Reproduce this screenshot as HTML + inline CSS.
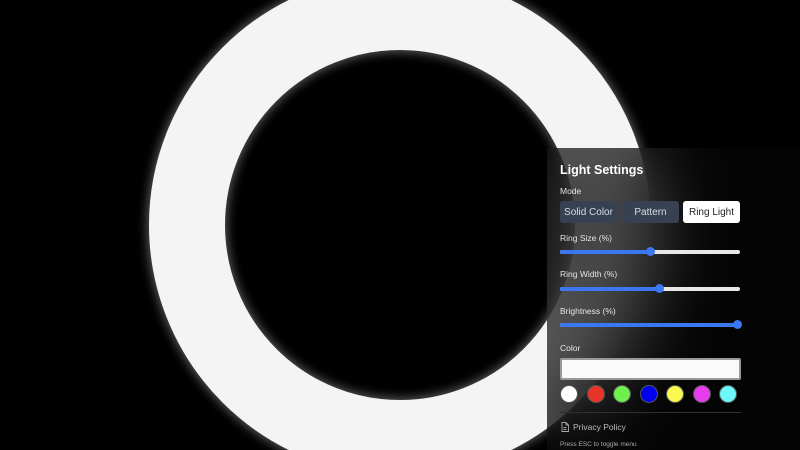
<!DOCTYPE html>
<html><head><style>
html,body{margin:0;padding:0;width:800px;height:450px;overflow:hidden;background:#000;font-family:"Liberation Sans",sans-serif;}
.wrap{position:relative;width:800px;height:450px;overflow:hidden;}
svg.bg{position:absolute;left:0;top:0}
.panel{position:absolute;left:547px;top:148px;width:253px;height:302px;background:rgba(6,6,6,.65);backdrop-filter:blur(40px);-webkit-backdrop-filter:blur(40px);color:#fff;}
.a{position:absolute;left:13px;}
.t{font-size:12.5px;font-weight:bold;top:15px}
.l{font-size:8.5px;color:#e6e6e6}
.btn{position:absolute;top:53px;height:22px;width:57px;border-radius:3px;background:#374151;color:#d8dde4;font-size:10px;text-align:center;line-height:23px}
.sl{position:absolute;left:13px;width:180px;height:4px;border-radius:2px;background:#e8e8e8}
.sl i{position:absolute;left:0;top:0;height:4px;border-radius:2px;background:#3b78f0}
.sl b{position:absolute;top:-3px;width:9px;height:9px;border-radius:50%;background:#3b78f0;margin-left:-4px}
.sw{position:absolute;top:237px;width:16px;height:16px;border-radius:50%;border:1px solid #555}
</style></head><body><div class="wrap">
<svg class="bg" width="800" height="450" viewBox="0 0 800 450">
<defs><filter id="g" x="-20%" y="-20%" width="140%" height="140%"><feGaussianBlur stdDeviation="5"/></filter></defs>
<circle cx="400" cy="225" r="213" fill="none" stroke="#fff" stroke-opacity=".35" stroke-width="80" filter="url(#g)"/>
<circle cx="400" cy="225" r="213" fill="none" stroke="#f4f4f4" stroke-width="76"/>
</svg>
<div class="panel">
<div class="a t">Light Settings</div>
<div class="a l" style="top:38px">Mode</div>
<div class="btn" style="left:13px">Solid Color</div>
<div class="btn" style="left:75px">Pattern</div>
<div class="btn" style="left:136px;background:#fff;color:#222">Ring Light</div>
<div class="a l" style="top:85px">Ring Size (%)</div>
<div class="sl" style="top:102px"><i style="width:90px"></i><b style="left:90px"></b></div>
<div class="a l" style="top:121px">Ring Width (%)</div>
<div class="sl" style="top:139px"><i style="width:99px"></i><b style="left:99px"></b></div>
<div class="a l" style="top:158px">Brightness (%)</div>
<div class="sl" style="top:175px"><i style="width:177px"></i><b style="left:177px"></b></div>
<div class="a l" style="top:195px">Color</div>
<div style="position:absolute;left:13px;top:210px;width:177px;height:18px;background:#fafafa;border:2px solid #999;border-radius:2px"></div>
<div class="sw" style="left:13px;background:#fff"></div>
<div class="sw" style="left:40px;background:#e8332a"></div>
<div class="sw" style="left:66px;background:#6ef04f"></div>
<div class="sw" style="left:93px;background:#0000f0"></div>
<div class="sw" style="left:119px;background:#f8f850"></div>
<div class="sw" style="left:146px;background:#e83cef"></div>
<div class="sw" style="left:172px;background:#6cf8f8"></div>
<div style="position:absolute;left:13px;top:264px;width:181px;height:1px;background:#2a2f38"></div>
<svg style="position:absolute;left:14px;top:274px" width="8" height="10" viewBox="0 0 8 10"><path d="M1 .5h4l2.5 2.5v6.5h-6.5z M5 .5v2.5h2.5 M2.5 5.5h3 M2.5 7.5h3" fill="none" stroke="#aaa" stroke-width=".9"/></svg>
<div class="a l" style="left:26px;top:274px;color:#bbb">Privacy Policy</div>
<div class="a" style="top:293px;font-size:6.5px;color:#aaa">Press ESC to toggle menu</div>
</div>
</div></body></html>
